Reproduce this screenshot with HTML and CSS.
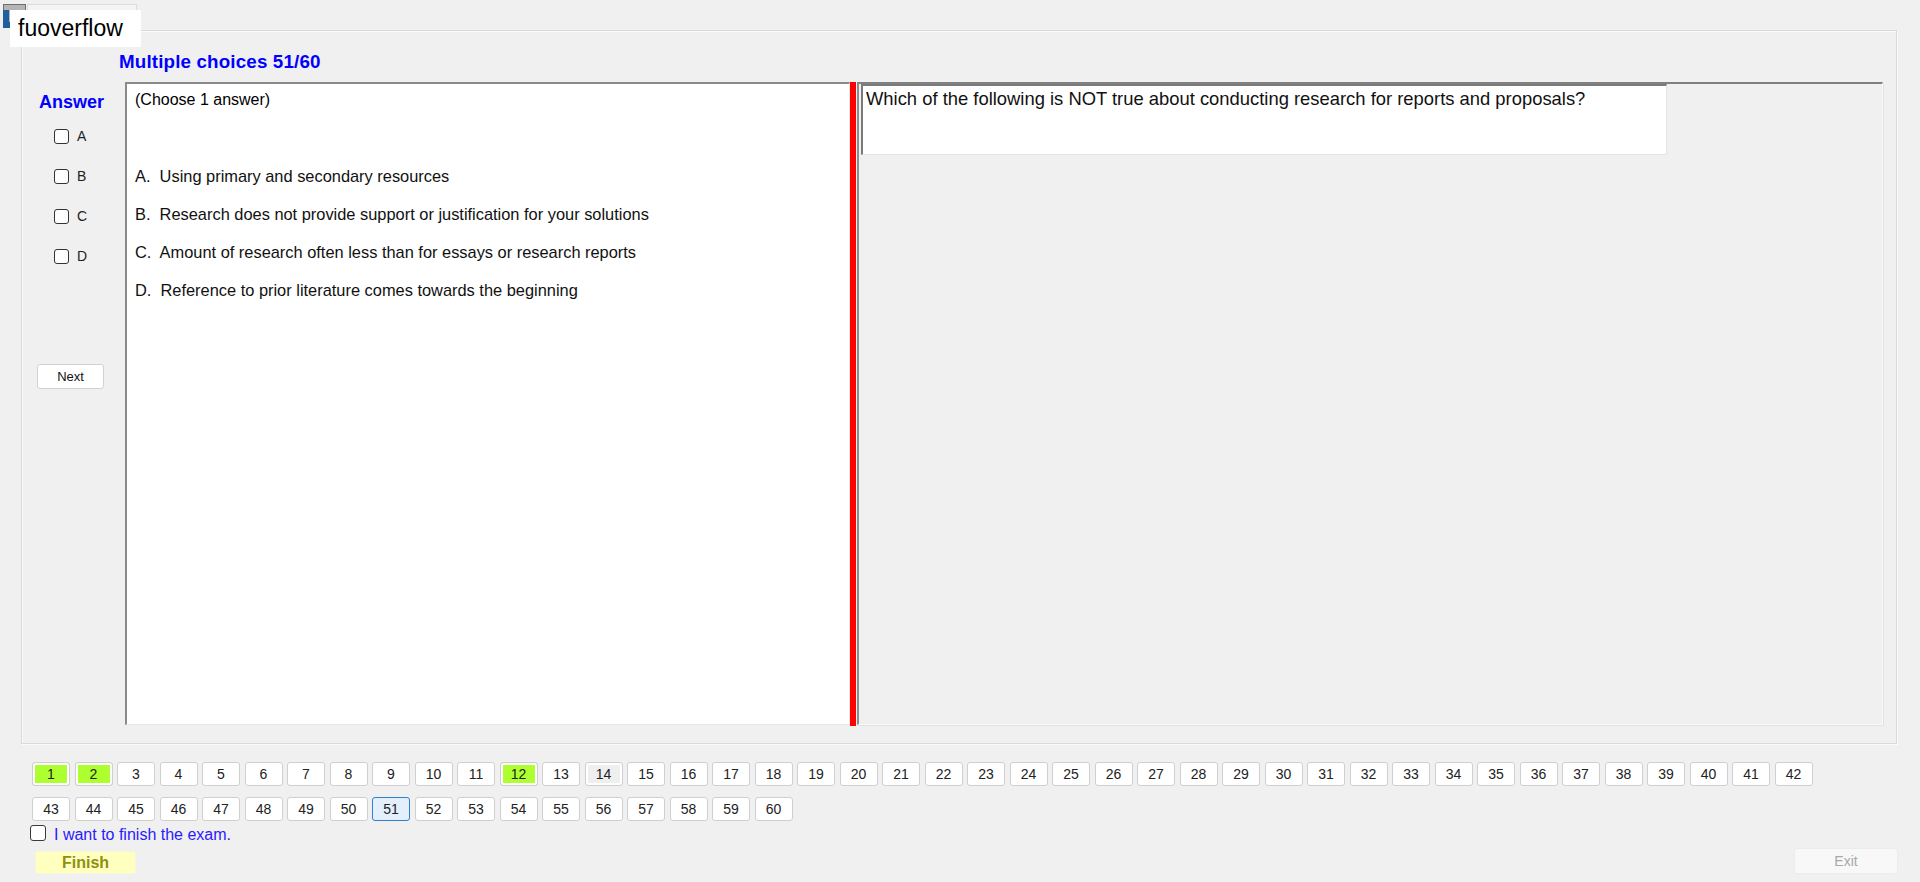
FILE: index.html
```html
<!DOCTYPE html>
<html>
<head>
<meta charset="utf-8">
<link rel="stylesheet" href="styles.css">
</head>
<body>
<div class="tab-ghost"></div>
<svg class="app-icon" width="26" height="28" viewBox="0 0 26 28">
  <rect x="3.5" y="3.5" width="22" height="22" fill="#b4b4b4" stroke="#6e6e6e"/>
  <rect x="3" y="9" width="6" height="18" fill="#1f5f9f"/>
  <rect x="3" y="21" width="22" height="6" fill="#1f5f9f"/>
</svg>
<div class="brand">fuoverflow</div>

<div class="group">
  <div class="title">Multiple choices 51/60</div>
  <div class="work">
    <div class="answers">
      <div class="answers-head">Answer</div>
      <label class="opt-row"><span class="box"></span><span class="opt-letter">A</span></label>
      <label class="opt-row"><span class="box"></span><span class="opt-letter">B</span></label>
      <label class="opt-row"><span class="box"></span><span class="opt-letter">C</span></label>
      <label class="opt-row"><span class="box"></span><span class="opt-letter">D</span></label>
      <button class="next-btn">Next</button>
    </div>
    <div class="content-box">
      <div class="hint">(Choose 1 answer)</div>
      <div class="choices">
        <div class="choice">A.&nbsp; Using primary and secondary resources</div>
        <div class="choice">B.&nbsp; Research does not provide support or justification for your solutions</div>
        <div class="choice">C.&nbsp; Amount of research often less than for essays or research reports</div>
        <div class="choice">D.&nbsp; Reference to prior literature comes towards the beginning</div>
      </div>
    </div>
    <div class="splitter"></div>
    <div class="right-panel">
      <div class="question">Which of the following is NOT true about conducting research for reports and proposals?</div>
    </div>
  </div>
</div>

<div class="pager">
  <div class="pager-row">
    <span class="pg done">1</span><span class="pg done">2</span><span class="pg">3</span><span class="pg">4</span><span class="pg">5</span><span class="pg">6</span><span class="pg">7</span><span class="pg">8</span><span class="pg">9</span><span class="pg">10</span><span class="pg">11</span><span class="pg done">12</span><span class="pg">13</span><span class="pg grey">14</span><span class="pg">15</span><span class="pg">16</span><span class="pg">17</span><span class="pg">18</span><span class="pg">19</span><span class="pg">20</span><span class="pg">21</span><span class="pg">22</span><span class="pg">23</span><span class="pg">24</span><span class="pg">25</span><span class="pg">26</span><span class="pg">27</span><span class="pg">28</span><span class="pg">29</span><span class="pg">30</span><span class="pg">31</span><span class="pg">32</span><span class="pg">33</span><span class="pg">34</span><span class="pg">35</span><span class="pg">36</span><span class="pg">37</span><span class="pg">38</span><span class="pg">39</span><span class="pg">40</span><span class="pg">41</span><span class="pg">42</span>
  </div>
  <div class="pager-row">
    <span class="pg">43</span><span class="pg">44</span><span class="pg">45</span><span class="pg">46</span><span class="pg">47</span><span class="pg">48</span><span class="pg">49</span><span class="pg">50</span><span class="pg current">51</span><span class="pg">52</span><span class="pg">53</span><span class="pg">54</span><span class="pg">55</span><span class="pg">56</span><span class="pg">57</span><span class="pg">58</span><span class="pg">59</span><span class="pg">60</span>
  </div>
</div>

<label class="finish-check"><span class="box small"></span><span class="finish-text">I want to finish the exam.</span></label>

<div class="actions">
  <button class="finish-btn">Finish</button>
  <button class="exit-btn">Exit</button>
</div>
</body>
</html>
```

FILE: styles.css
```css
html, body {
  margin: 0;
  padding: 0;
}
body {
  width: 1920px;
  height: 882px;
  overflow: hidden;
  background: #f0f0f0;
  font-family: "Liberation Sans", Arial, sans-serif;
  color: #000;
  position: relative;
  padding-top: 30px;
  box-sizing: border-box;
}

.tab-ghost {
  position: absolute;
  left: 27px;
  top: 4px;
  width: 108px;
  height: 26px;
  border: 1px solid #dcdcdc;
  border-bottom: none;
  background: #f4f4f4;
}
.app-icon {
  position: absolute;
  left: 0;
  top: 1px;
}
.brand {
  position: absolute;
  left: 10px;
  top: 10px;
  width: 131px;
  height: 37px;
  background: #fff;
  font-size: 23px;
  line-height: 37px;
  padding-left: 8px;
  box-sizing: border-box;
  color: #000;
}

.group {
  margin-left: 21px;
  width: 1876px;
  height: 714px;
  box-sizing: border-box;
  border: 1px solid #dadada;
  box-shadow: inset 1px 1px 0 #fbfbfb, 1px 1px 0 #fbfbfb;
}
.title {
  margin: 21px 0 0 97px;
  height: 20px;
  line-height: 20px;
  font-size: 18.8px;
  letter-spacing: 0.15px;
  font-weight: bold;
  color: #0000ff;
}
.work {
  display: flex;
  margin-top: 10px;
  height: 644px;
}

.answers {
  width: 103px;
  flex: none;
  display: flex;
  flex-direction: column;
}
.answers-head {
  margin: 10px 0 4px 17px;
  height: 20px;
  line-height: 20px;
  font-size: 18px;
  font-weight: bold;
  color: #0000ff;
}
.opt-row {
  display: flex;
  align-items: center;
  height: 40px;
  padding-left: 32px;
}
.box {
  width: 15px;
  height: 15px;
  box-sizing: border-box;
  border: 1px solid #333;
  border-radius: 3px;
  background: #fff;
  flex: none;
}
.opt-letter {
  margin-left: 8px;
  font-size: 14px;
  color: #222;
}
.next-btn {
  margin: 88px 0 0 15px;
  width: 67px;
  height: 25px;
  background: #fff;
  border: 1px solid #d2d2d2;
  border-radius: 3px;
  font-family: "Liberation Sans", Arial, sans-serif;
  font-size: 13px;
  color: #111;
  padding: 0;
}

.content-box {
  width: 725px;
  height: 643px;
  flex: none;
  box-sizing: border-box;
  background: #fff;
  border-top: 2px solid #8a8a8a;
  border-left: 2px solid #8a8a8a;
  border-right: 1px solid #e6e6e6;
  border-bottom: 1px solid #e6e6e6;
  padding: 6px 0 0 8px;
  font-size: 16px;
}
.hint {
  height: 20px;
  line-height: 20px;
}
.choices {
  margin-top: 56px;
  display: flex;
  flex-direction: column;
  gap: 18px;
  font-size: 16.4px;
}
.choice {
  height: 20px;
  line-height: 20px;
  color: #111;
}

.splitter {
  width: 6px;
  height: 644px;
  flex: none;
  background: #ff0000;
}
.right-panel {
  margin-left: 1px;
  width: 1026px;
  height: 643px;
  flex: none;
  box-sizing: border-box;
  border-top: 2px solid #808080;
  border-left: 2px solid #8c8c8c;
  border-right: 1px solid #fafafa;
  border-bottom: 1px solid #fafafa;
  box-shadow: 1px 1px 0 #e2e2e2;
}
.question {
  margin-left: 2px;
  width: 806px;
  height: 71px;
  box-sizing: border-box;
  background: #fff;
  border-top: 2px solid #7a7a7a;
  border-left: 2px solid #7a7a7a;
  border-right: 1px solid #e4e4e4;
  border-bottom: 1px solid #e4e4e4;
  padding: 3px 0 0 3px;
  font-size: 18.4px;
  line-height: 20px;
  color: #111;
}

.pager {
  margin: 18px 0 0 32px;
  display: flex;
  flex-direction: column;
  gap: 11px;
}
.pager-row {
  display: flex;
  gap: 4.5px;
}
.pg {
  width: 38px;
  height: 24px;
  box-sizing: border-box;
  background: #fff;
  border: 1px solid #cfcfcf;
  border-radius: 3px;
  display: flex;
  align-items: center;
  justify-content: center;
  font-size: 14px;
  color: #222;
}
.pg.done {
  background: #adff2f;
  box-shadow: inset 0 0 0 2px #fff;
}
.pg.grey {
  background: #efefef;
  box-shadow: inset 0 0 0 2px #fff;
}
.pg.current {
  background: #e3effa;
  border-color: #2f80d0;
}

.finish-check {
  margin: 2px 0 0 30px;
  height: 20px;
  display: flex;
  align-items: center;
}
.box.small {
  width: 16px;
  height: 16px;
  border-color: #3a3a3a;
}
.finish-text {
  margin-left: 8px;
  font-size: 16px;
  color: #2a1aff;
  position: relative;
  top: 2px;
}

.actions {
  margin-top: 5px;
  padding: 0 22px 0 35px;
  display: flex;
  justify-content: space-between;
  align-items: flex-end;
}
.finish-btn {
  width: 101px;
  height: 23px;
  background: #ffffc0;
  border: 1px solid #f6f6d8;
  border-radius: 2px;
  font-family: "Liberation Sans", Arial, sans-serif;
  font-size: 16px;
  font-weight: bold;
  color: #8f8f10;
  padding: 0;
}
.exit-btn {
  width: 104px;
  height: 26px;
  background: #f8f8f8;
  border: 1px solid #ececec;
  border-radius: 3px;
  font-family: "Liberation Sans", Arial, sans-serif;
  font-size: 14px;
  color: #a8a8a8;
  padding: 0;
}
```
